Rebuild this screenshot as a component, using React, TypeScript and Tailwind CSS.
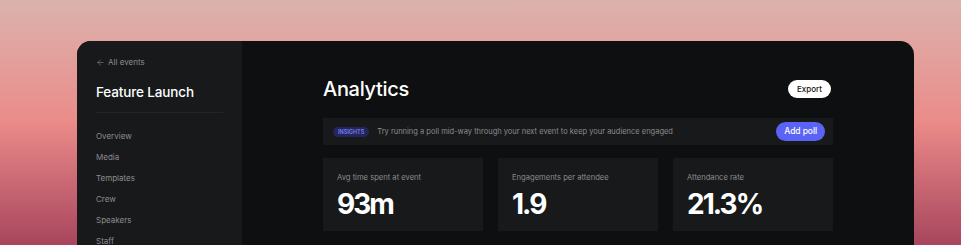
import { ArrowLeft } from "lucide-react";

const nav = ["Overview", "Media", "Templates", "Crew", "Speakers", "Staff"];

const stats = [
  { label: "Avg time spent at event", value: "93m" },
  { label: "Engagements per attendee", value: "1.9" },
  { label: "Attendance rate", value: "21.3%" },
];

export default function App() {
  return (
    <div
      className="h-[245px] overflow-hidden bg-gradient-to-b from-[#dbb2ad] via-[#ea8b89] to-[#a8455e] pt-[41px] pl-[77px] pr-[47px]"
      style={{ fontFamily: "Inter, 'Noto Sans', sans-serif" }}
    >
      <div className="flex h-[260px] overflow-hidden rounded-t-[14px] bg-[#0e0f10]">
        <aside className="w-[165px] shrink-0 bg-[#18191b] px-[19px] pt-[15px]">
          <div className="flex items-center gap-[3px] text-[8px] leading-[12px] text-[#8b8c8f]">
            <ArrowLeft size={9} strokeWidth={1.6} />
            <span>All events</span>
          </div>
          <div className="mt-[14px] text-[13.5px] font-medium leading-[20px] tracking-[-0.01em] text-white">
            Feature Launch
          </div>
          <div className="mt-[10px] border-t border-[#232427]" />
          <nav className="mt-[17px] flex flex-col gap-[9px]">
            {nav.map((item) => (
              <div key={item} className="text-[8px] leading-[12px] text-[#8b8c8f]">
                {item}
              </div>
            ))}
          </nav>
        </aside>

        <main className="flex flex-1 justify-center pt-[35px]">
          <div className="w-[510px]">
            <div className="flex h-[26px] items-center justify-between">
              <h1 className="text-[20px] font-medium leading-[26px] tracking-[-0.015em] text-white">Analytics</h1>
              <button className="mr-[2px] h-[18px] rounded-full bg-white px-[9px] text-[8px] font-medium text-[#111]">
                Export
              </button>
            </div>

            <div className="mt-[16px] flex h-[27px] items-center bg-[#18191b] pl-[10px] pr-[8px]">
              <span className="rounded-full bg-[#23265a] px-[5px] text-[5.5px] font-semibold leading-[10px] text-[#7b80f0]">
                INSIGHTS
              </span>
              <span className="ml-[8px] text-[7.5px] text-[#8b8c8f]">
                Try running a poll mid-way through your next event to keep your audience engaged
              </span>
              <button className="ml-auto h-[19px] rounded-full bg-[#5a63f5] px-[8px] text-[8.5px] font-medium tracking-[-0.01em] text-white">
                Add poll
              </button>
            </div>

            <div className="mt-[13px] grid grid-cols-3 gap-[15px]">
              {stats.map((s) => (
                <div key={s.label} className="h-[73px] bg-[#18191b] px-[14px] pt-[14px]">
                  <div className="text-[7.6px] leading-[12px] text-[#8b8c8f]">{s.label}</div>
                  <div className="mt-[4px] text-[28px] font-bold leading-[32px] tracking-[-0.07em] text-white">
                    {s.value}
                  </div>
                </div>
              ))}
            </div>
          </div>
        </main>
      </div>
    </div>
  );
}
